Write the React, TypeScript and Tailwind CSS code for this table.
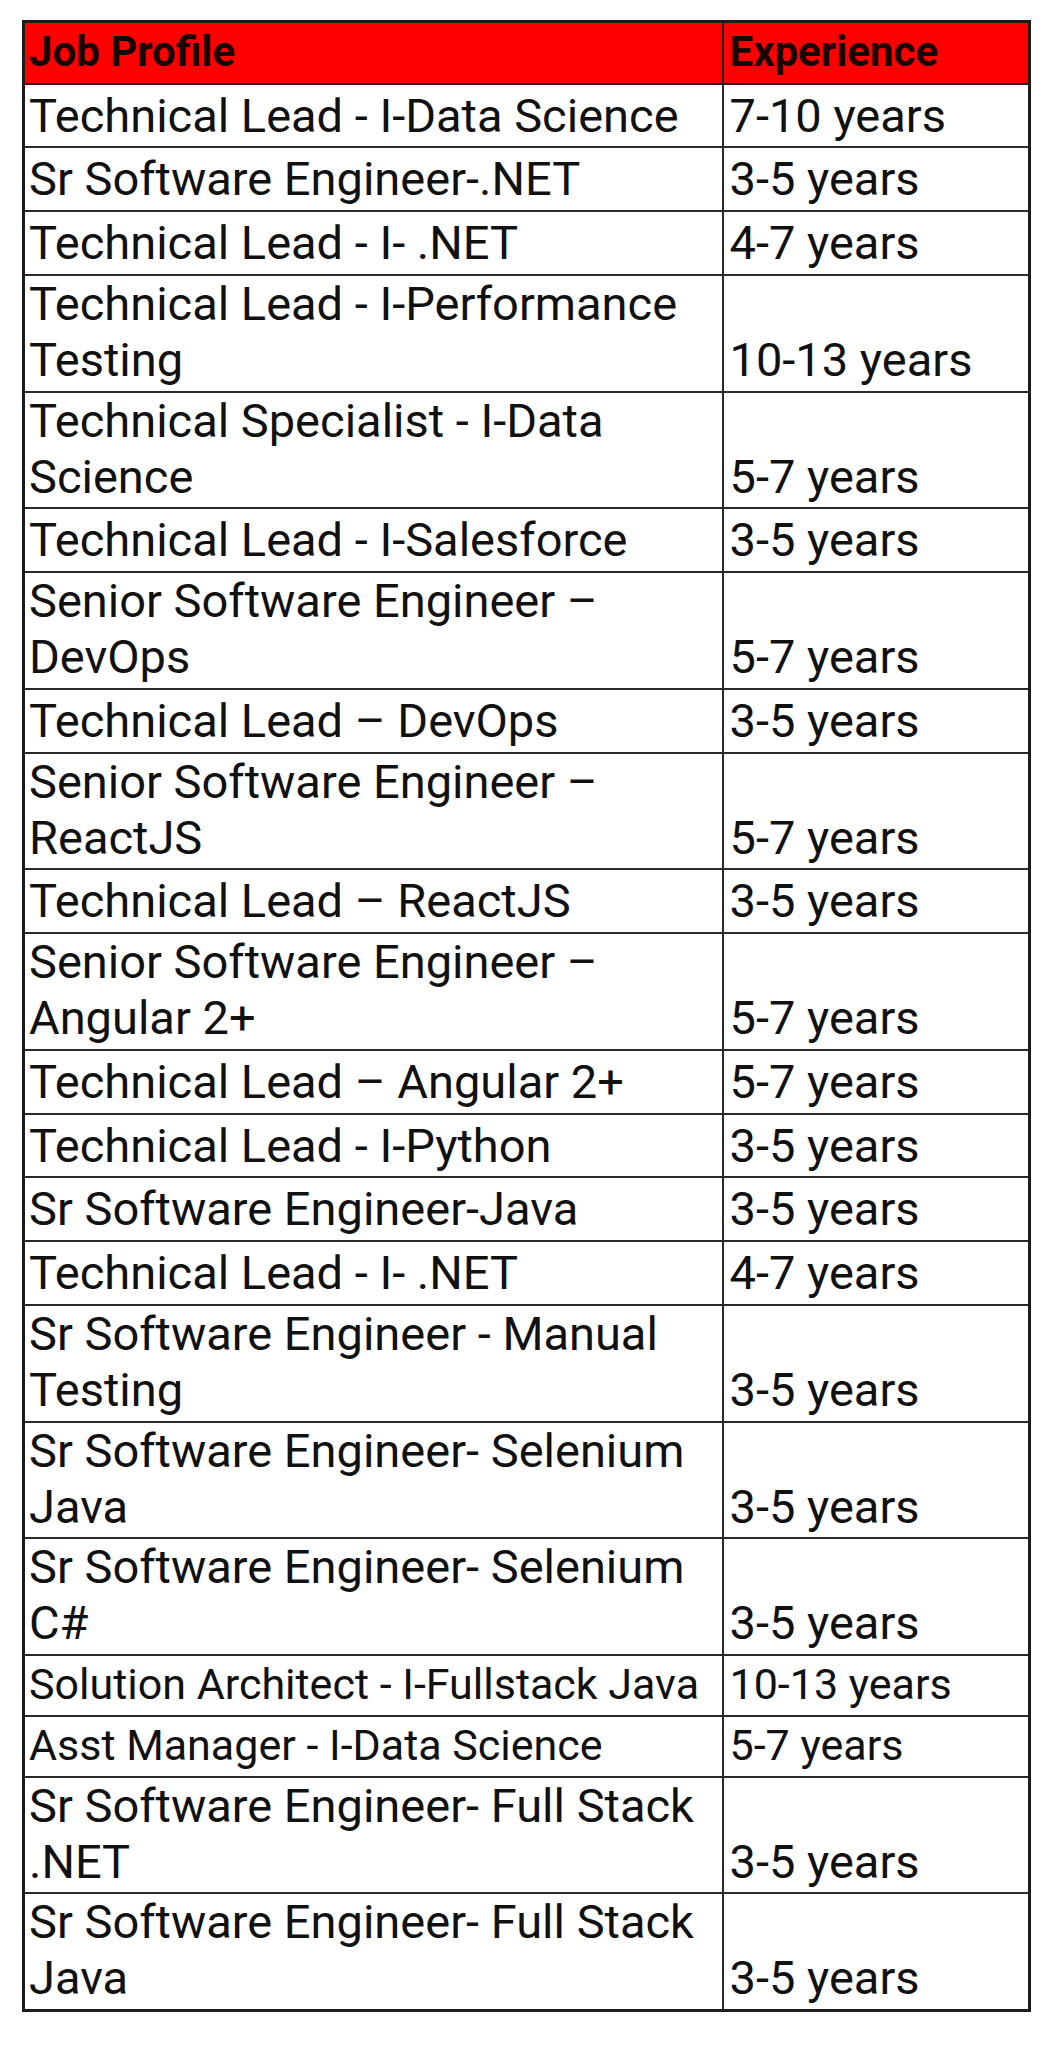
const rows: { job: string; exp: string; small?: boolean }[] = [
  { job: 'Technical Lead - I-Data Science', exp: '7-10 years' },
  { job: 'Sr Software Engineer-.NET', exp: '3-5 years' },
  { job: 'Technical Lead - I- .NET', exp: '4-7 years' },
  { job: 'Technical Lead - I-Performance Testing', exp: '10-13 years' },
  { job: 'Technical Specialist - I-Data Science', exp: '5-7 years' },
  { job: 'Technical Lead - I-Salesforce', exp: '3-5 years' },
  { job: 'Senior Software Engineer – DevOps', exp: '5-7 years' },
  { job: 'Technical Lead – DevOps', exp: '3-5 years' },
  { job: 'Senior Software Engineer – ReactJS', exp: '5-7 years' },
  { job: 'Technical Lead – ReactJS', exp: '3-5 years' },
  { job: 'Senior Software Engineer – Angular 2+', exp: '5-7 years' },
  { job: 'Technical Lead – Angular 2+', exp: '5-7 years' },
  { job: 'Technical Lead - I-Python', exp: '3-5 years' },
  { job: 'Sr Software Engineer-Java', exp: '3-5 years' },
  { job: 'Technical Lead - I- .NET', exp: '4-7 years' },
  { job: 'Sr Software Engineer - Manual Testing', exp: '3-5 years' },
  { job: 'Sr Software Engineer- Selenium Java', exp: '3-5 years' },
  { job: 'Sr Software Engineer- Selenium C#', exp: '3-5 years' },
  { job: 'Solution Architect - I-Fullstack Java', exp: '10-13 years', small: true },
  { job: 'Asst Manager - I-Data Science', exp: '5-7 years', small: true },
  { job: 'Sr Software Engineer- Full Stack .NET', exp: '3-5 years' },
  { job: 'Sr Software Engineer- Full Stack Java', exp: '3-5 years' },
];

export default function App() {
  return (
    <div className="min-h-[2048px] w-[1043px] bg-white pt-[20px] pl-[22px]" style={{ fontFamily: 'Roboto, "Liberation Sans", sans-serif' }}>
      <table className="w-[1006px] table-fixed border-collapse border-[3px] border-[#1c1c1c] text-[#111]">
        <colgroup>
          <col className="w-[699px]" />
          <col className="w-[307px]" />
        </colgroup>
        <thead>
          <tr className="bg-[#ff0000]">
            <th className="h-[62px] border-2 border-[#1c1c1c] pl-[4px] pr-1 pb-[3px] text-left align-bottom text-[42px] font-bold leading-[56px] text-[#1a0505]">Job Profile</th>
            <th className="h-[62px] border-2 border-[#1c1c1c] pl-[6px] pr-1 pb-[3px] text-left align-bottom text-[42px] font-bold leading-[56px] text-[#1a0505]">Experience</th>
          </tr>
        </thead>
        <tbody>
          {rows.map((row, i) => (
            <tr key={i}>
              <td className={`border-2 border-[#2a2a2a] pl-[4px] pr-1 pb-[2.75px] align-bottom leading-[56px] ${row.small ? 'h-[60px] text-[43px]' : 'h-[63.75px] text-[47px]'}`}>{row.job}</td>
              <td className={`border-2 border-[#2a2a2a] pl-[6px] pr-1 pb-[2.75px] align-bottom leading-[56px] ${row.small ? 'h-[60px] text-[43px]' : 'h-[63.75px] text-[47px]'}`}>{row.exp}</td>
            </tr>
          ))}
        </tbody>
      </table>
    </div>
  );
}
